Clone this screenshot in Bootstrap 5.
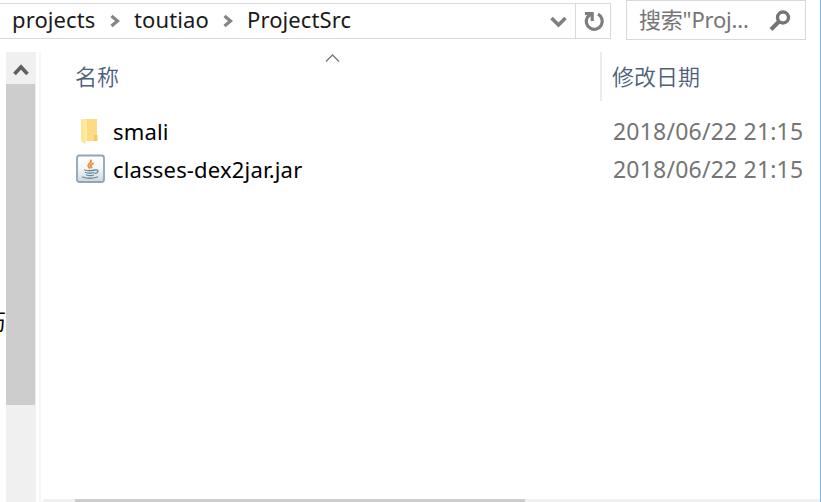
<!DOCTYPE html>
<html lang="zh-CN">
<head>
<meta charset="utf-8">
<title>ProjectSrc</title>
<link href="https://cdn.jsdelivr.net/npm/bootstrap@5.3.0/dist/css/bootstrap.min.css" rel="stylesheet">
<style>
body{width:821px;height:502px;font-family:"Noto Sans","Noto Sans CJK SC",sans-serif;font-size:22px;line-height:32px;color:#1a1a1a;letter-spacing:.1px}
.explorer{width:821px;height:502px;border-right:1px solid #7ab8e6}
.toolbar{height:52px}
.address{width:611px;height:36px;margin-top:3px;border:1px solid #d9d9d9;border-left:0;padding-left:12px}
.crumb{padding-bottom:4px}
.crumb-a{width:85px}.crumb-b{width:76px}
.sep{width:37px;padding-left:13px}
.drop{width:25px}
.reload{width:35px;height:34px;border-left:1px solid #d9d9d9;padding-left:2px}
.search{width:180px;height:40px;margin-left:15px;border:1px solid #d9d9d9;padding:0 14px 0 12px;color:#757575;letter-spacing:-.2px}
.search-text{padding-bottom:2px}
.tree{width:6px}
.tree span{margin-bottom:166px;font-family:"Noto Sans CJK SC",sans-serif;color:#000}
.vbar{width:30px;background:#f0f0f0}
.vbar-up{height:32px;padding-top:4px}
.vbar-thumb{width:29px;height:321px;background:#cdcdcd}
.gutter{width:2px;margin-left:3px;background:#f7f7f7}
.files{padding-left:2px}
.heads{height:49px;color:#4c607a;font-family:"Noto Sans CJK SC",sans-serif;font-weight:350;letter-spacing:0}
.head-name{width:557px;padding-left:32px;padding-top:7px}
.head-date{border-left:2px solid #ebebeb;padding-left:10px;padding-top:7px}
.sort{left:282px;top:1px}
.rows{padding:11px 0 0 32px}
.file-row{height:38px;color:#000}
.file-icon{width:30px;height:30px;margin-right:8px}
.file-name{width:500px;letter-spacing:.18px}
.file-date{color:#757575;font-size:23px;letter-spacing:.2px}
.hbar{height:3px;background:#f0f0f0;padding-left:32px}
.hbar-thumb{width:450px;background:#cdcdcd}
</style>
<script src="https://cdn.jsdelivr.net/npm/bootstrap@5.3.0/dist/js/bootstrap.bundle.min.js"></script>
</head>
<body class="bg-white overflow-hidden">
<div class="explorer d-flex flex-column overflow-hidden">
  <header class="toolbar d-flex align-items-start flex-shrink-0">
    <div class="address d-flex align-items-center">
      <span class="crumb crumb-a text-nowrap">projects</span>
      <span class="sep d-flex"><svg width="12" height="14" viewBox="0 0 12 14" fill="none" stroke="#858585" stroke-width="3.2"><path d="M1.500 2l6 5-6 5"/></svg></span>
      <span class="crumb crumb-b text-nowrap">toutiao</span>
      <span class="sep d-flex"><svg width="12" height="14" viewBox="0 0 12 14" fill="none" stroke="#858585" stroke-width="3.2"><path d="M1.500 2l6 5-6 5"/></svg></span>
      <span class="crumb text-nowrap">ProjectSrc</span>
      <span class="drop ms-auto d-flex"><svg width="17" height="14" viewBox="0 0 17 14" fill="none" stroke="#808080" stroke-width="3.6"><path d="M1.500 4l7 7 7-7"/></svg></span>
      <span class="reload d-flex align-items-center justify-content-center"><svg width="22" height="22" viewBox="0 0 22 22" fill="none" stroke="#7d7d7d" stroke-width="3.2"><path d="M15 4.200A8 8 0 1 1 4.500 7L8 4"/><path d="M2 3.500h7.200V11"/></svg></span>
    </div>
    <div class="search d-flex align-items-center justify-content-between">
      <span class="search-text text-nowrap">搜索"Proj...</span>
      <svg width="22" height="22" viewBox="0 0 22 22" fill="none" stroke="#757575" stroke-width="3.4"><circle cx="14" cy="8.500" r="5.500"/><path d="M10 12.500L2 20.500" stroke-width="4"/></svg>
    </div>
  </header>
  <main class="d-flex flex-grow-1">
    <div class="tree d-flex align-items-end justify-content-end overflow-hidden"><span>历</span></div>
    <div class="vbar">
      <div class="vbar-up d-flex align-items-center justify-content-center"><svg width="16" height="14" viewBox="0 0 16 14" fill="none" stroke="#606060" stroke-width="3.600"><path d="M1.500 11L8 4l6.500 7"/></svg></div>
      <div class="vbar-thumb"></div>
    </div>
    <div class="gutter"></div>
    <section class="files d-flex flex-column flex-grow-1">
      <div class="heads position-relative d-flex">
        <div class="head-name">名称</div>
        <svg class="sort position-absolute" width="16" height="10" viewBox="0 0 16 10" fill="none" stroke="#777" stroke-width="1.3"><path d="M1 8.500l6.500-6.500 6.500 6.500"/></svg>
        <div class="head-date">修改日期</div>
      </div>
      <div class="rows flex-grow-1">
        <div class="file-row d-flex align-items-center">
          <svg class="file-icon" viewBox="0 0 30 30"><path d="M9 3h13v22H9z" fill="#fbdc83"/><path d="M19 19h3.500v6H19z" fill="#f5ca59"/><path d="M6 3h4l2 2v19l-2 4-4-3z" fill="#ffeab0"/><path d="M6 3l4 2.500V28l-4-3z" fill="#ffe694"/></svg>
          <span class="file-name">smali</span><span class="file-date text-nowrap">2018/06/22 21:15</span>
        </div>
        <div class="file-row d-flex align-items-center">
          <svg class="file-icon" viewBox="0 0 30 30"><defs><linearGradient id="tile" x2="0" y2="1"><stop stop-color="#fff"/><stop offset=".5" stop-color="#f3f5f7"/><stop offset="1" stop-color="#ccd6de"/></linearGradient></defs><rect x="2" y="1.500" width="27" height="26.500" rx="2.500" fill="url(#tile)" stroke="#91a5b5" stroke-width="1.800"/><g fill="none" stroke-linecap="round"><path d="M16 6.500c1 2.500-4 3.500-2.500 6l1 1.500M18 9.500c-3 1.500-2.500 2.500-1.500 4" stroke="#ef8a35" stroke-width="1.900"/><path d="M9.500 16q5 1.500 10.500 0M10.500 18.500q4.500 1.500 8.500 0M11.500 21q4 1.300 7 0M21 16c3-.5 2.500 3-.8 3.300M7.500 23q7 2.500 15 0" stroke="#6287a2" stroke-width="1.300"/></g></svg>
          <span class="file-name">classes-dex2jar.jar</span><span class="file-date text-nowrap">2018/06/22 21:15</span>
        </div>
      </div>
      <div class="hbar d-flex"><div class="hbar-thumb"></div></div>
    </section>
  </main>
</div>
</body>
</html>
